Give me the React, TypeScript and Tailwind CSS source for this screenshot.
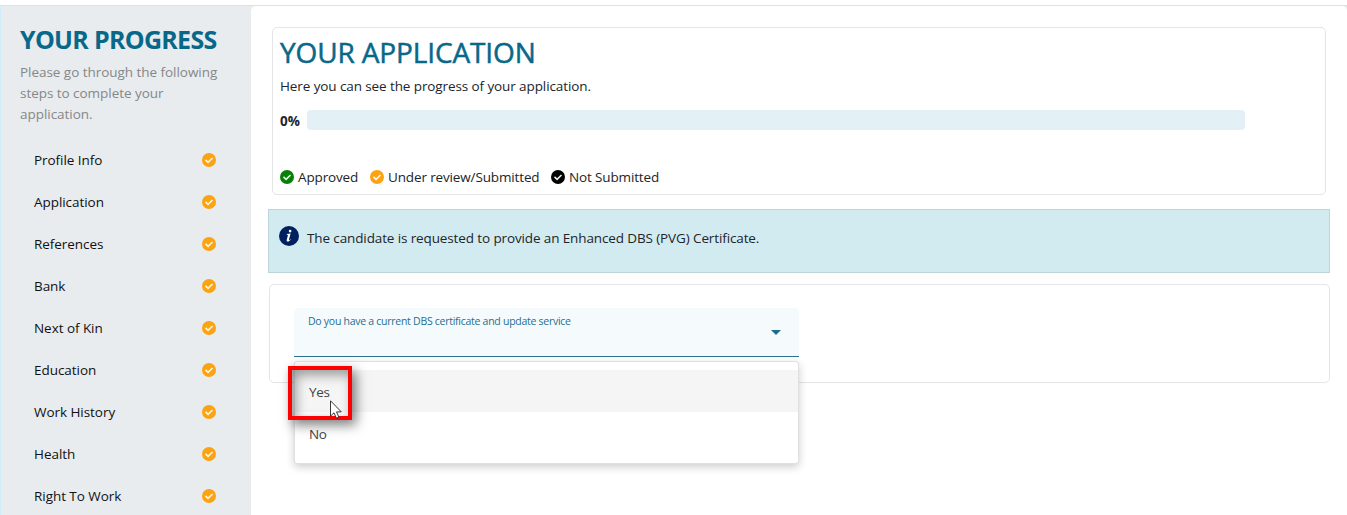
const steps: string[] = [
  'Profile Info',
  'Application',
  'References',
  'Bank',
  'Next of Kin',
  'Education',
  'Work History',
  'Health',
  'Right To Work',
];

function CheckBadge({ className }: { className: string }) {
  return (
    <svg viewBox="0 0 512 512" className={`size-3.5 shrink-0 ${className}`}>
      <circle cx="256" cy="256" r="256" fill="currentColor" />
      <path d="M128 250 L222 344 L384 182" fill="none" stroke="#fff" strokeOpacity="0.92" strokeWidth="56" />
    </svg>
  );
}

function InfoBadge() {
  return (
    <svg viewBox="0 0 20 20" className="mt-4 size-5 shrink-0">
      <circle cx="10" cy="10" r="10" fill="#002060" />
      <circle cx="11.1" cy="5.1" r="1.35" fill="#fff" />
      <path
        d="M7.8 8.1 L11.6 7.6 L10 13.6 C9.8 14.5 10.3 14.4 11.4 13.2 L11.8 13.6 C10.4 15.5 9.2 15.9 8.4 15.6 C7.6 15.3 7.6 14.4 7.8 13.6 L8.9 9.6 C9.1 8.8 8.7 8.7 7.7 8.7 Z"
        fill="#fff"
      />
    </svg>
  );
}

function Sidebar() {
  return (
    <aside className="w-[251px] shrink-0 border-l border-[#cdeefb] bg-[#e8ecee] pl-[19px]">
      <h1 className="mt-[17px] h-8 whitespace-nowrap text-[25px] leading-8 font-bold tracking-[-0.7px] text-[#08688a]">
        YOUR PROGRESS
      </h1>
      <p className="mt-[7px] text-[13.5px] leading-[21px] whitespace-nowrap tracking-[-0.04px] text-[#858789]">
        Please go through the following
        <br />
        steps to complete your
        <br />
        application.
      </p>
      <ul className="mt-[14px]">
        {steps.map((step) => (
          <li key={step} className="flex h-[42px] items-center justify-between pr-[35px] pl-[14px]">
            <span className="text-[13.5px] tracking-[-0.05px] text-[#111]">{step}</span>
            <CheckBadge className="text-[#fca311]" />
          </li>
        ))}
      </ul>
    </aside>
  );
}

function ProgressCard() {
  return (
    <section className="ml-[4px] flex h-[168px] w-[1054px] flex-col rounded-[5px] border border-[#e3e5e7] pl-[7px]">
      <h2 className="mt-[6px] h-9 text-[28px] leading-9 tracking-[-0.13px] whitespace-nowrap text-[#08688a] [-webkit-text-stroke:0.5px_#08688a]">
        YOUR APPLICATION
      </h2>
      <p className="mt-[6px] text-[13.5px] leading-[21px] tracking-[-0.1px]">
        Here you can see the progress of your application.
      </p>
      <div className="mt-[13px] flex h-5 items-center">
        <span className="w-[27px] pt-[3px] text-[13.5px] font-bold">0%</span>
        <div className="h-5 w-[938px] rounded bg-[#e3f0f6]" />
      </div>
      <div className="mt-[37px] flex h-[21px] items-center text-[13.5px] tracking-[-0.14px] whitespace-nowrap">
        <div className="flex w-[90px] items-center gap-1">
          <CheckBadge className="mb-[2px] text-[#078007]" />
          <span>Approved</span>
        </div>
        <div className="flex w-[181px] items-center gap-1">
          <CheckBadge className="mb-[2px] text-[#fca311]" />
          <span>Under review/Submitted</span>
        </div>
        <div className="flex items-center gap-1">
          <CheckBadge className="mb-[2px] text-black" />
          <span>Not Submitted</span>
        </div>
      </div>
    </section>
  );
}

function Dropdown() {
  return (
    <div className="relative w-[505px]">
      <div className="flex h-[49px] justify-between rounded-t border-b border-[#2b7390] bg-[#f5fafd] pr-[18px] pl-[14px]">
        <span className="mt-[5px] text-[10.5px] leading-4 tracking-[-0.27px] whitespace-nowrap text-[#25708e]">
          Do you have a current DBS certificate and update service
        </span>
        <svg viewBox="0 0 10 5" className="mt-[22px] h-[5px] w-[10px]">
          <path d="M0 0H10L5 5Z" fill="#1b6d8e" />
        </svg>
      </div>
      <div className="absolute top-[53px] left-0 h-[103px] w-[505px] rounded-[3px] border border-[#e0e0e0] bg-white pt-2 text-[13.5px] tracking-[-0.3px] text-[#444] shadow-[0_3px_8px_rgba(0,0,0,0.2)]">
        <div className="flex h-[42px] items-center bg-[#f5f5f5] pt-[2px] pl-[14px]">Yes</div>
        <div className="flex h-[42px] items-center pt-[2px] pl-[14px]">No</div>
      </div>
      <div className="absolute top-[58px] left-[-6px] h-[54px] w-[64px] border-4 border-[#fe0000] shadow-[4px_5px_11px_rgba(0,0,0,0.5),inset_4px_5px_12px_rgba(0,0,0,0.38)]" />
      <svg viewBox="0 0 12 19" className="absolute top-[92px] left-[36px] h-[19px] w-[12px]">
        <path
          d="M0.5 0.8V16.2L4 12.8L6.4 18.2L8.9 17.1L6.5 11.9H11.3Z"
          fill="#fff"
          stroke="#222"
          strokeWidth="0.9"
        />
      </svg>
    </div>
  );
}

export default function App() {
  return (
    <div className="flex h-[515px] w-[1347px] flex-col overflow-hidden bg-white pt-[5px] font-['Open_Sans','Noto_Sans',sans-serif] text-[#212529]">
      <div className="flex h-[510px] border-t border-[#dfe1e2] bg-[#e8ecee]">
        <Sidebar />
        <main className="flex grow flex-col rounded-t-[5px] bg-white pt-[21px] pl-[17px]">
          <ProgressCard />
          <div className="mt-[14px] flex h-16 w-[1062px] border border-[#bcd4da] bg-[#d2ebf0] pl-[10px]">
            <InfoBadge />
            <span className="mt-[18px] ml-2 text-[13.5px] leading-[21px] tracking-[-0.12px] whitespace-nowrap">
              The candidate is requested to provide an Enhanced DBS (PVG) Certificate.
            </span>
          </div>
          <section className="mt-[11px] ml-px h-[99px] w-[1061px] shrink-0 rounded-[5px] border border-[#e3e5e7] pt-[23px] pl-6">
            <Dropdown />
          </section>
        </main>
      </div>
    </div>
  );
}
